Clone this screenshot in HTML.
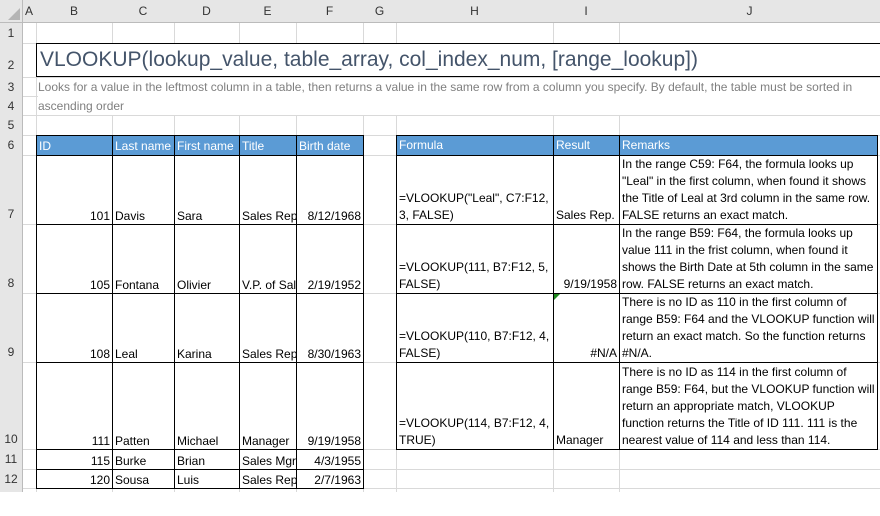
<!DOCTYPE html>
<html><head><meta charset="utf-8"><style>
body{margin:0;width:880px;height:492px;overflow:hidden;background:#fff;font-family:"Liberation Sans",sans-serif;position:relative}
.a{position:absolute}
.hd{background:#e6e6e6;color:#333;font-size:12px;text-align:center;line-height:22px}
.rh{background:#e6e6e6;color:#333;font-size:12px;text-align:center;width:22px;left:0}
.vl{position:absolute;width:1px;background:#d9d9d9;top:23px;height:469px}
.hl{position:absolute;height:1px;background:#d9d9d9;left:22px;width:858px}
table{position:absolute;border-collapse:collapse;table-layout:fixed;font-size:12px;color:#000}
td{border:1px solid #000;padding:0 2px;vertical-align:bottom;white-space:nowrap;overflow:hidden;line-height:16px;background:#fff}
tr.h td{background:#5b9bd5;color:#fff;vertical-align:middle}
.r{text-align:right}
.w td{white-space:normal;line-height:17px}
</style></head><body>
<div class="a hd" style="left:0;top:0;width:880px;height:22px;border-bottom:1px solid #bbb"></div>
<div class="a" style="left:0;top:0;width:22px;height:22px;background:#e6e6e6"></div>
<svg class="a" style="left:8px;top:8px" width="12" height="12"><polygon points="12,0 12,12 0,12" fill="#b5b5b5"/></svg>
<div class="a hd" style="left:22px;top:0;width:14px">A</div>
<div class="a hd" style="left:36px;top:0;width:76px">B</div>
<div class="a hd" style="left:112px;top:0;width:62px">C</div>
<div class="a hd" style="left:174px;top:0;width:65px">D</div>
<div class="a hd" style="left:239px;top:0;width:57px">E</div>
<div class="a hd" style="left:296px;top:0;width:67px">F</div>
<div class="a hd" style="left:363px;top:0;width:33px">G</div>
<div class="a hd" style="left:396px;top:0;width:157px">H</div>
<div class="a hd" style="left:553px;top:0;width:66px">I</div>
<div class="a hd" style="left:619px;top:0;width:261px">J</div>
<div class="a" style="left:22px;top:0;width:1px;height:492px;background:#bbb"></div>
<div class="a" style="left:0;top:23px;width:22px;height:469px;background:#e6e6e6"></div>
<div class="a rh" style="top:23px;height:20px;line-height:20px">1</div>
<div class="a rh" style="top:43px;height:34px;line-height:44px">2</div>
<div class="a rh" style="top:77px;height:19px;line-height:20px">3</div>
<div class="a rh" style="top:96px;height:19px;line-height:20px">4</div>
<div class="a rh" style="top:115px;height:20px;line-height:20px">5</div>
<div class="a rh" style="top:135px;height:20px;line-height:20px">6</div>
<div class="a rh" style="top:155px;height:69px;line-height:118px">7</div>
<div class="a rh" style="top:224px;height:69px;line-height:118px">8</div>
<div class="a rh" style="top:293px;height:69px;line-height:118px">9</div>
<div class="a rh" style="top:362px;height:87px;line-height:154px">10</div>
<div class="a rh" style="top:449px;height:20px;line-height:20px">11</div>
<div class="a rh" style="top:469px;height:19px;line-height:20px">12</div>
<div class="vl" style="left:36px"></div><div class="vl" style="left:112px"></div><div class="vl" style="left:174px"></div><div class="vl" style="left:239px"></div><div class="vl" style="left:296px"></div><div class="vl" style="left:363px"></div><div class="vl" style="left:396px"></div><div class="vl" style="left:553px"></div><div class="vl" style="left:619px"></div>
<div class="hl" style="top:43px"></div><div class="hl" style="top:77px"></div><div class="hl" style="top:96px"></div><div class="hl" style="top:115px"></div><div class="hl" style="top:135px"></div><div class="hl" style="top:155px"></div><div class="hl" style="top:224px"></div><div class="hl" style="top:293px"></div><div class="hl" style="top:362px"></div><div class="hl" style="top:449px"></div><div class="hl" style="top:469px"></div><div class="hl" style="top:488px"></div>
<div class="a" style="left:0;top:23px;width:22px;height:469px;border-right:1px solid #bbb"></div>
<div class="a" style="left:36px;top:43px;width:850px;height:32px;border:1px solid #000;background:#fff"></div>
<div class="a" style="left:40px;top:44px;font-size:21px;line-height:32px;color:#44546a;white-space:nowrap">VLOOKUP(lookup_value, table_array, col_index_num, [range_lookup])</div>
<div class="a" style="left:38px;top:78px;width:842px;font-size:12px;line-height:19px;color:#7f7f7f;background:#fff;height:37px">Looks for a value in the leftmost column in a table, then returns a value in the same row from a column you specify. By default, the table must be sorted in ascending order</div>
<table style="left:36px;top:135px;width:328px">
<col style="width:76px"><col style="width:62px"><col style="width:65px"><col style="width:57px"><col style="width:67px">
<tr class="h" style="height:20px"><td>ID</td><td>Last name</td><td>First name</td><td>Title</td><td>Birth date</td></tr>
<tr style="height:69px"><td class="r">101</td><td>Davis</td><td>Sara</td><td>Sales Rep.</td><td class="r">8/12/1968</td></tr>
<tr style="height:69px"><td class="r">105</td><td>Fontana</td><td>Olivier</td><td>V.P. of Sal</td><td class="r">2/19/1952</td></tr>
<tr style="height:69px"><td class="r">108</td><td>Leal</td><td>Karina</td><td>Sales Rep.</td><td class="r">8/30/1963</td></tr>
<tr style="height:87px"><td class="r">111</td><td>Patten</td><td>Michael</td><td>Manager</td><td class="r">9/19/1958</td></tr>
<tr style="height:20px"><td class="r">115</td><td>Burke</td><td>Brian</td><td>Sales Mgr</td><td class="r">4/3/1955</td></tr>
<tr style="height:19px"><td class="r">120</td><td>Sousa</td><td>Luis</td><td>Sales Rep.</td><td class="r">2/7/1963</td></tr>
</table>
<table class="w" style="left:396px;top:135px;width:481px">
<col style="width:157px"><col style="width:66px"><col style="width:258px">
<tr class="h" style="height:20px"><td>Formula</td><td>Result</td><td>Remarks</td></tr>
<tr style="height:69px"><td>=VLOOKUP("Leal", C7:F12, 3, FALSE)</td><td style="white-space:nowrap">Sales Rep.</td><td>In the range C59: F64, the formula looks up "Leal" in the first column, when found it shows the Title of Leal at 3rd column in the same row. FALSE returns an exact match.</td></tr>
<tr style="height:69px"><td>=VLOOKUP(111, B7:F12, 5, FALSE)</td><td class="r">9/19/1958</td><td>In the range B59: F64, the formula looks up value 111 in the frist column, when found it shows the Birth Date at 5th column in the same row. FALSE returns an exact match.</td></tr>
<tr style="height:69px"><td>=VLOOKUP(110, B7:F12, 4, FALSE)</td><td class="r">#N/A</td><td>There is no ID as 110 in the first column of range B59: F64 and the VLOOKUP function will return an exact match. So the function returns #N/A.</td></tr>
<tr style="height:87px"><td>=VLOOKUP(114, B7:F12, 4, TRUE)</td><td>Manager</td><td>There is no ID as 114 in the first column of range B59: F64, but the VLOOKUP function will return an appropriate match, VLOOKUP function returns the Title of ID 111. 111 is the nearest value of 114 and less than 114.</td></tr>
</table>
<svg class="a" style="left:554px;top:294px" width="6" height="6"><polygon points="0,0 6,0 0,6" fill="#1e8a1e"/></svg>
</body></html>
